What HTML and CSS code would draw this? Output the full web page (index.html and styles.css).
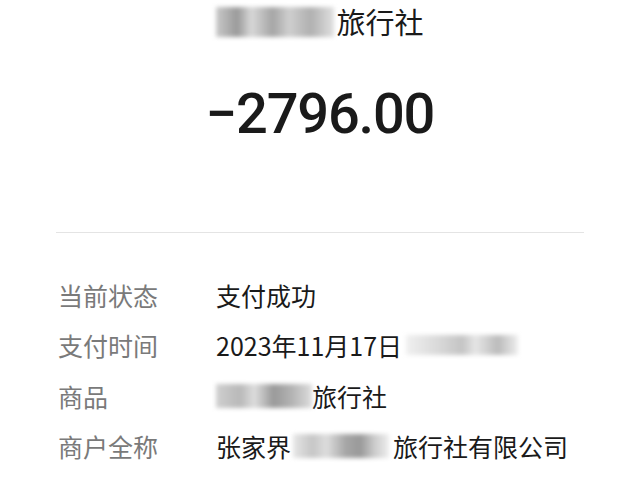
FILE: index.html
```html
<!DOCTYPE html>
<html lang="zh">
<head>
<meta charset="utf-8">
<link rel="stylesheet" href="styles.css">
</head>
<body>
<div class="page">
  <div class="title"><span class="blur b-title"></span>旅行社</div>
  <div class="amount">−2796.00</div>
  <div class="divider"></div>
  <div class="rows">
    <div class="row"><div class="label">当前状态</div><div class="value">支付成功</div></div>
    <div class="row"><div class="label">支付时间</div><div class="value">2023年11月17日<span class="blur b-time"></span></div></div>
    <div class="row"><div class="label">商品</div><div class="value"><span class="blur b-goods"></span>旅行社</div></div>
    <div class="row"><div class="label">商户全称</div><div class="value">张家界<span class="blur b-merch"></span>旅行社有限公司</div></div>
  </div>
</div>
</body>
</html>
```
FILE: styles.css
```css
html, body { margin: 0; padding: 0; background: #fff; }
.page {
  width: 640px;
  height: 484px;
  overflow: hidden;
  font-family: "Noto Sans CJK SC", "Noto Sans", sans-serif;
  color: #1a1a1a;
}
.title {
  font-size: 29px;
  line-height: 40px;
  padding-top: 1px;
  display: flex;
  justify-content: center;
  align-items: center;
}
.blur {
  display: inline-block;
  filter: blur(2px);
  background: linear-gradient(90deg, #c9c9c9 0%, #9a9a9a 18%, #d8d8d8 30%, #a5a5a5 48%, #cfcfcf 62%, #b0b0b0 80%, #e0e0e0 100%);
}
.b-title { width: 118px; height: 30px; margin-top: 2px; margin-right: 2px; }
.b-time { width: 112px; height: 20px; margin-left: 4px;
  background: linear-gradient(90deg, #f0f0f0 0%, #d8d8d8 30%, #c4c4c4 50%, #e6e6e6 62%, #bbb 82%, #eee 100%); }
.b-goods { width: 96px; height: 24px;
  background: linear-gradient(90deg, #d0d0d0 0%, #b8b8b8 25%, #ddd 40%, #999 60%, #b5b5b5 80%, #ddd 100%); }
.b-merch { width: 96px; height: 24px; margin: 0 4px 0 2px;
  background: linear-gradient(90deg, #e6e6e6 0%, #c6c6c6 20%, #ddd 35%, #a6a6a6 55%, #999 70%, #ccc 85%, #eee 100%); }
.amount {
  text-align: center;
  font-family: "Roboto", "DejaVu Sans", sans-serif;
  font-weight: 500;
  font-size: 56px;
  line-height: 70px;
  margin-top: 38px;
  letter-spacing: -1.2px;
}
.divider {
  height: 1px;
  background: #e4e4e4;
  margin: 83px 56px 0 56px;
}
.rows {
  padding: 37px 0 0 58px;
  display: flex;
  flex-direction: column;
}
.row {
  display: flex;
  height: 50.3px;
  align-items: center;
  font-size: 25px;
}
.label {
  width: 158px;
  color: #7a7a7a;
}
.value {
  display: flex;
  align-items: center;
  color: #1a1a1a;
}
```
